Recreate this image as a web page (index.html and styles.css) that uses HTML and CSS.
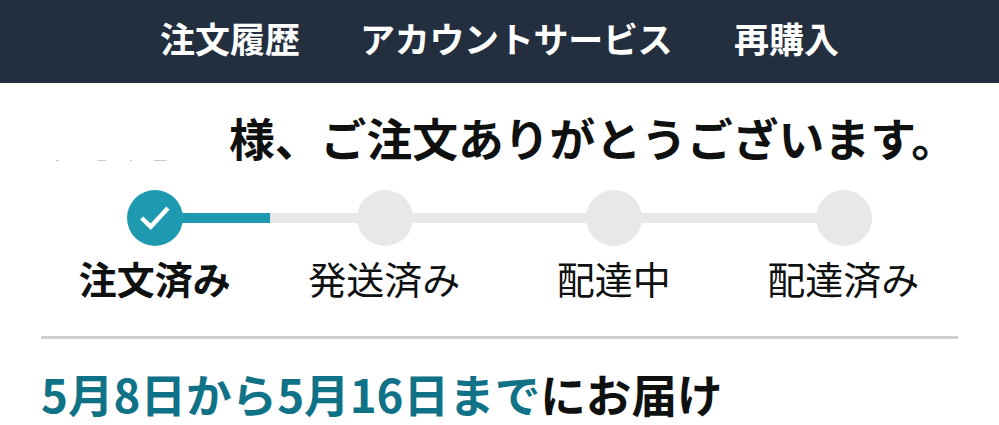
FILE: index.html
```html
<!DOCTYPE html>
<html lang="ja">
<head>
<meta charset="utf-8">
<title>注文</title>
<link rel="stylesheet" href="styles.css">
</head>
<body>
<nav class="nav">
  <span class="nav-a">注文履歴</span>
  <span class="nav-b">アカウントサービス</span>
  <span class="nav-c">再購入</span>
</nav>
<div class="greeting">
  <div class="smudges"><i class="s1"></i><i class="s2"></i><i class="s3"></i><i class="s4"></i></div>
  <h1 class="thanks">様、ご注文ありがとうございます。</h1>
</div>
<section class="tracker">
  <div class="track">
    <div class="line"><div class="line-done"></div></div>
    <div class="dots">
      <div class="dot done">
        <svg viewBox="0 0 56 56" width="56" height="56"><path d="M14.700 28 L23.700 36.700 L41 18" fill="none" stroke="#fff" stroke-width="4.500"/></svg>
      </div>
      <div class="dot"></div>
      <div class="dot"></div>
      <div class="dot"></div>
    </div>
  </div>
  <div class="labels">
    <span class="label strong">注文済み</span>
    <span class="label">発送済み</span>
    <span class="label">配達中</span>
    <span class="label">配達済み</span>
  </div>
</section>
<hr class="rule">
<p class="delivery"><span class="teal">5月8日から5月16日まで</span>にお届け</p>
</body>
</html>
```
FILE: styles.css
```css
html, body { margin: 0; padding: 0; background: #fff; overflow: hidden; }
body { width: 999px; height: 425px; font-family: "Noto Sans CJK JP", "Noto Sans", sans-serif; color: #0f1111; }
.nav { height: 83px; background: #232f3e; display: flex; align-items: center; color: #fff; font-size: 35px; font-weight: 700; line-height: 1; padding: 0 0 9px 160px; box-sizing: border-box; }
.nav-a { width: 200px; }
.nav-b { width: 374px; white-space: nowrap; letter-spacing: -0.3px; }
.greeting { position: relative; padding: 29px 0 0 229px; }
.thanks { margin: 0; font-size: 45.800px; line-height: 50px; font-weight: 700; white-space: nowrap; }
.smudges { position: absolute; left: 0; top: 77px; width: 200px; height: 2px; }
.smudges i { position: absolute; top: 0; height: 1px; background: #c9c9c9; }
.s1 { left: 56px; width: 3px; }
.s2 { left: 97px; width: 9px; }
.s3 { left: 130px; width: 2px; }
.s4 { left: 154px; width: 13px; }
.tracker { margin-top: 28px; padding: 0 40px; }
.track { position: relative; height: 56px; }
.line { position: absolute; left: 115px; top: 23px; width: 690px; height: 10px; background: #e9e7e8; }
.line-done { width: 115px; height: 100%; background: #1e9ab0; }
.dots { position: absolute; inset: 0 0 0 87px; display: flex; gap: 173.500px; }
.dot { width: 56px; height: 56px; border-radius: 50%; background: #e9e7e8; flex: none; }
.dot.done { background: #1e9ab0; }
.dot svg { display: block; }
.labels { display: flex; margin-top: 10px; font-size: 38px; line-height: 44px; }
.label { width: 229.500px; text-align: center; white-space: nowrap; }
.strong { font-weight: 700; }
.rule { margin: 36px 41px 0; border: 0; height: 3px; background: #cfcfcf; }
.delivery { margin: 28px 0 0 41px; font-size: 45.600px; line-height: 52px; font-weight: 700; white-space: nowrap; }
.teal { color: #0f7286; }
```
